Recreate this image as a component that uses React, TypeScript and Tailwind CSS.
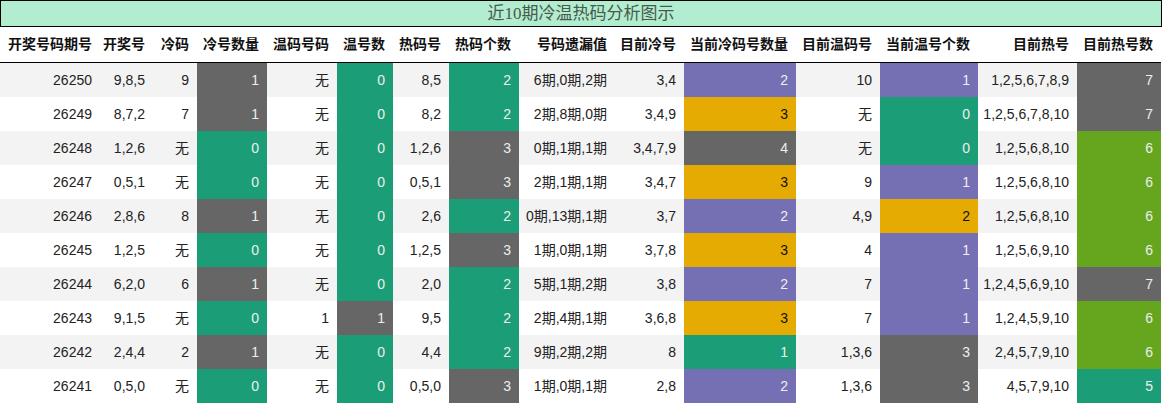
import React from "react";

type C = "g" | "n" | "p" | "o" | "l" | undefined;

const COLORS: Record<string, string> = {
  g: "bg-[#1b9e77] text-[#eeeeee]",
  n: "bg-[#666666] text-[#eeeeee]",
  p: "bg-[#7570b3] text-[#eeeeee]",
  o: "bg-[#e6ab02] text-[#111111]",
  l: "bg-[#66a61e] text-[#eeeeee]",
};

const GRID =
  "grid grid-cols-[100px_53px_44px_70px_70px_56px_56px_70px_98px_67px_112px_84px_98px_99px_84px]";

const headers = [
  "开奖号码期号",
  "开奖号",
  "冷码",
  "冷号数量",
  "温码号码",
  "温号数",
  "热码号",
  "热码个数",
  "号码遗漏值",
  "目前冷号",
  "当前冷码号数量",
  "目前温码号",
  "当前温号个数",
  "目前热号",
  "目前热号数",
];

type Cell = [string, C?];

const rows: Cell[][] = [
  [["26250"], ["9,8,5"], ["9"], ["1", "n"], ["无"], ["0", "g"], ["8,5"], ["2", "g"], ["6期,0期,2期"], ["3,4"], ["2", "p"], ["10"], ["1", "p"], ["1,2,5,6,7,8,9"], ["7", "n"]],
  [["26249"], ["8,7,2"], ["7"], ["1", "n"], ["无"], ["0", "g"], ["8,2"], ["2", "g"], ["2期,8期,0期"], ["3,4,9"], ["3", "o"], ["无"], ["0", "g"], ["1,2,5,6,7,8,10"], ["7", "n"]],
  [["26248"], ["1,2,6"], ["无"], ["0", "g"], ["无"], ["0", "g"], ["1,2,6"], ["3", "n"], ["0期,1期,1期"], ["3,4,7,9"], ["4", "n"], ["无"], ["0", "g"], ["1,2,5,6,8,10"], ["6", "l"]],
  [["26247"], ["0,5,1"], ["无"], ["0", "g"], ["无"], ["0", "g"], ["0,5,1"], ["3", "n"], ["2期,1期,1期"], ["3,4,7"], ["3", "o"], ["9"], ["1", "p"], ["1,2,5,6,8,10"], ["6", "l"]],
  [["26246"], ["2,8,6"], ["8"], ["1", "n"], ["无"], ["0", "g"], ["2,6"], ["2", "g"], ["0期,13期,1期"], ["3,7"], ["2", "p"], ["4,9"], ["2", "o"], ["1,2,5,6,8,10"], ["6", "l"]],
  [["26245"], ["1,2,5"], ["无"], ["0", "g"], ["无"], ["0", "g"], ["1,2,5"], ["3", "n"], ["1期,0期,1期"], ["3,7,8"], ["3", "o"], ["4"], ["1", "p"], ["1,2,5,6,9,10"], ["6", "l"]],
  [["26244"], ["6,2,0"], ["6"], ["1", "n"], ["无"], ["0", "g"], ["2,0"], ["2", "g"], ["5期,1期,2期"], ["3,8"], ["2", "p"], ["7"], ["1", "p"], ["1,2,4,5,6,9,10"], ["7", "n"]],
  [["26243"], ["9,1,5"], ["无"], ["0", "g"], ["1"], ["1", "n"], ["9,5"], ["2", "g"], ["2期,4期,1期"], ["3,6,8"], ["3", "o"], ["7"], ["1", "p"], ["1,2,4,5,9,10"], ["6", "l"]],
  [["26242"], ["2,4,4"], ["2"], ["1", "n"], ["无"], ["0", "g"], ["4,4"], ["2", "g"], ["9期,2期,2期"], ["8"], ["1", "g"], ["1,3,6"], ["3", "n"], ["2,4,5,7,9,10"], ["6", "l"]],
  [["26241"], ["0,5,0"], ["无"], ["0", "g"], ["无"], ["0", "g"], ["0,5,0"], ["3", "n"], ["1期,0期,1期"], ["2,8"], ["2", "p"], ["1,3,6"], ["3", "n"], ["4,5,7,9,10"], ["5", "g"]],
];

export default function App() {
  return (
    <div
      className="w-[1162px] h-[404px] bg-white overflow-hidden"
      style={{ fontFamily: '"Liberation Sans", "Noto Sans CJK SC", sans-serif' }}
    >
      <div
        className="h-[27px] border border-black bg-[#b3edd0] flex items-center justify-center text-[17px] text-[#475a4e] leading-none"
        style={{ fontFamily: '"Liberation Serif", "Noto Sans CJK SC", serif' }}
      >
        近10期冷温热码分析图示
      </div>
      <div className="w-[1161px]">
        <div className={`${GRID} h-[36px] border-b border-black`}>
          {headers.map((h, i) => (
            <div
              key={i}
              className={`flex items-center justify-end text-[14px] font-bold text-[#111111] whitespace-nowrap ${
                i === 8 ? "pr-[10px]" : "pr-2"
              }`}
            >
              {h}
            </div>
          ))}
        </div>
        {rows.map((r, ri) => (
          <div
            key={ri}
            className={`${GRID} h-[34px] ${ri % 2 === 0 ? "bg-[#f3f3f3]" : "bg-white"}`}
          >
            {r.map(([t, c], ci) => (
              <div
                key={ci}
                className={`flex items-center justify-end text-[14px] whitespace-nowrap ${
                  ci === 8 ? "pr-[10px]" : "pr-2"
                } ${c ? COLORS[c] : "text-[#222222]"}`}
              >
                {t}
              </div>
            ))}
          </div>
        ))}
      </div>
    </div>
  );
}
